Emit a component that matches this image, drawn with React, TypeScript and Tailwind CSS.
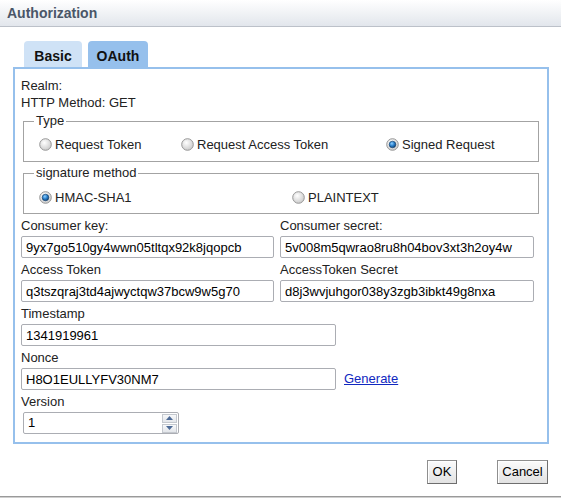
import React from "react";

function Radio({ checked, id }: { checked?: boolean; id: string }) {
  return (
    <svg width="13" height="13" viewBox="0 0 13 13" className="shrink-0">
      <defs>
        <radialGradient id={`rg-${id}`} cx="40%" cy="35%" r="75%">
          <stop offset="0" stopColor="#ffffff" />
          <stop offset="1" stopColor="#c4c4c4" />
        </radialGradient>
        <radialGradient id={`rb-${id}`} cx="40%" cy="35%" r="70%">
          <stop offset="0" stopColor="#8fd0ff" />
          <stop offset="0.5" stopColor="#2a80cc" />
          <stop offset="1" stopColor="#0c3c6e" />
        </radialGradient>
      </defs>
      <circle cx="6.5" cy="6.5" r="5.8" fill={`url(#rg-${id})`} stroke="#979797" strokeWidth="1" />
      {checked && <circle cx="6.5" cy="6.5" r="3.3" fill={`url(#rb-${id})`} stroke="#0f3a66" strokeWidth="0.6" />}
    </svg>
  );
}

function RadioItem({ label, checked, id, w }: { label: string; checked?: boolean; id: string; w?: string }) {
  return (
    <div className={`flex items-center gap-[3px] h-[17px] ${w ?? ""}`}>
      <Radio checked={checked} id={id} />
      <span>{label}</span>
    </div>
  );
}

function Field({ label, value, w }: { label: string; value: string; w: string }) {
  return (
    <div className="flex flex-col">
      <div className="mt-[4px] leading-[16px] h-[16px]">{label}</div>
      <input
        readOnly
        value={value}
        className={`mt-[2px] h-[22px] ${w} border border-[#abadb3] rounded-[2px] px-[4px] text-[13px] text-black bg-white outline-none`}
      />
    </div>
  );
}

export default function App() {
  return (
    <div
      className="w-[561px] h-[498px] bg-white text-[13px] text-[#222] overflow-hidden flex flex-col"
      style={{ fontFamily: '"Liberation Sans", Arial, sans-serif' }}
    >
      {/* Title bar */}
      <div className="h-[27px] shrink-0 bg-linear-to-b from-white to-[#e2e6ec] border-b border-[#bcc1c9] pl-[7px] font-bold text-[14px] leading-[26px] text-[#4a5668]">
        Authorization
      </div>

      {/* Tabs */}
      <div className="mt-[14px] h-[26px] pl-[24px] flex gap-[6px] shrink-0">
        <div className="w-[58px] h-[26px] rounded-t-[4px] bg-[#cfe2f6] text-center font-bold text-[14px] text-[#111] pt-[7px] leading-[17px]">
          Basic
        </div>
        <div className="w-[60px] h-[26px] rounded-t-[4px] bg-[#96c0ec] text-center font-bold text-[14px] text-[#111] pt-[7px] leading-[17px]">
          OAuth
        </div>
      </div>

      {/* Panel */}
      <div className="ml-[13px] w-[536px] h-[377px] shrink-0 border-2 border-[#96c0ec] pl-[6px] pr-[8px] pt-[8px] pb-[8px] flex flex-col">
        <div className="leading-[17px] h-[17px]">Realm:</div>
        <div className="leading-[17px] h-[17px]">HTTP Method: GET</div>

        <fieldset className="mt-[2px] ml-[2px] w-[516px] border border-[#a3a3a3] pl-[10px] pb-[8px]">
          <legend className="px-[2px] leading-[16px] h-[16px]">Type</legend>
          <div className="mt-[7px] ml-[5px] flex">
            <RadioItem id="t1" label="Request Token" w="w-[142px]" />
            <RadioItem id="t2" label="Request Access Token" w="w-[205px]" />
            <RadioItem id="t3" label="Signed Request" checked />
          </div>
        </fieldset>

        <fieldset className="mt-[3px] ml-[2px] w-[516px] border border-[#a3a3a3] pl-[10px] pb-[7px]">
          <legend className="px-[2px] leading-[16px] h-[16px]">signature method</legend>
          <div className="mt-[8px] ml-[5px] flex">
            <RadioItem id="s1" label="HMAC-SHA1" checked w="w-[253px]" />
            <RadioItem id="s2" label="PLAINTEXT" />
          </div>
        </fieldset>

        <div className="flex">
          <div className="w-[259px]">
            <Field label="Consumer key:" value="9yx7go510gy4wwn05tltqx92k8jqopcb" w="w-[253px]" />
            <Field label="Access Token" value="q3tszqraj3td4ajwyctqw37bcw9w5g70" w="w-[253px]" />
          </div>
          <div className="w-[254px]">
            <Field label="Consumer secret:" value="5v008m5qwrao8ru8h04bov3xt3h2oy4w" w="w-[254px]" />
            <Field label="AccessToken Secret" value="d8j3wvjuhgor038y3zgb3ibkt49g8nxa" w="w-[254px]" />
          </div>
        </div>

        <Field label="Timestamp" value="1341919961" w="w-[315px]" />

        <div className="flex flex-col">
          <div className="mt-[4px] leading-[16px] h-[16px]">Nonce</div>
          <div className="mt-[2px] flex items-center">
            <input
              readOnly
              value="H8O1EULLYFV30NM7"
              className="h-[22px] w-[315px] border border-[#abadb3] rounded-[2px] px-[4px] text-[13px] text-black bg-white outline-none"
            />
            <span className="ml-[8px] text-[#1028c0] underline leading-[16px]">Generate</span>
          </div>
        </div>

        <div className="flex flex-col">
          <div className="mt-[4px] leading-[16px] h-[16px]">Version</div>
          <div className="mt-[2px] ml-[2px] h-[22px] w-[156px] border border-[#abadb3] rounded-[2px] bg-white flex items-center">
            <span className="pl-[4px] text-black flex-1 leading-[20px]">1</span>
            <div className="flex flex-col gap-[1px] mr-[1px]">
              <div className="w-[15px] h-[9px] border border-[#c4c8ce] bg-linear-to-b from-[#f7f8fa] to-[#e3e6ea] flex items-center justify-center">
                <svg width="7" height="4" viewBox="0 0 7 4">
                  <path d="M0 4 L3.5 0 L7 4 Z" fill="#4d6a96" />
                </svg>
              </div>
              <div className="w-[15px] h-[9px] border border-[#c4c8ce] bg-linear-to-b from-[#f7f8fa] to-[#e3e6ea] flex items-center justify-center">
                <svg width="7" height="4" viewBox="0 0 7 4">
                  <path d="M0 0 L7 0 L3.5 4 Z" fill="#4d6a96" />
                </svg>
              </div>
            </div>
          </div>
        </div>
      </div>

      {/* Buttons */}
      <div className="mt-[16px] h-[24px] flex justify-end pr-[13px] gap-[40px] shrink-0">
        <div className="w-[30px] h-[24px] border border-[#8f8f8f] border-b-[#6e6e6e] border-r-[#6e6e6e] bg-linear-to-b from-[#fbfbfb] to-[#e2e2e2] shadow-[inset_1px_1px_0_#ffffff] flex items-center justify-center text-black">
          OK
        </div>
        <div className="w-[51px] h-[24px] border border-[#8f8f8f] border-b-[#6e6e6e] border-r-[#6e6e6e] bg-linear-to-b from-[#fbfbfb] to-[#e2e2e2] shadow-[inset_1px_1px_0_#ffffff] flex items-center justify-center text-black">
          Cancel
        </div>
      </div>

      <div className="mt-[12px] h-[2px] shrink-0 border-t border-[#9a9a9a] bg-[#cfcfcf]" />
    </div>
  );
}
